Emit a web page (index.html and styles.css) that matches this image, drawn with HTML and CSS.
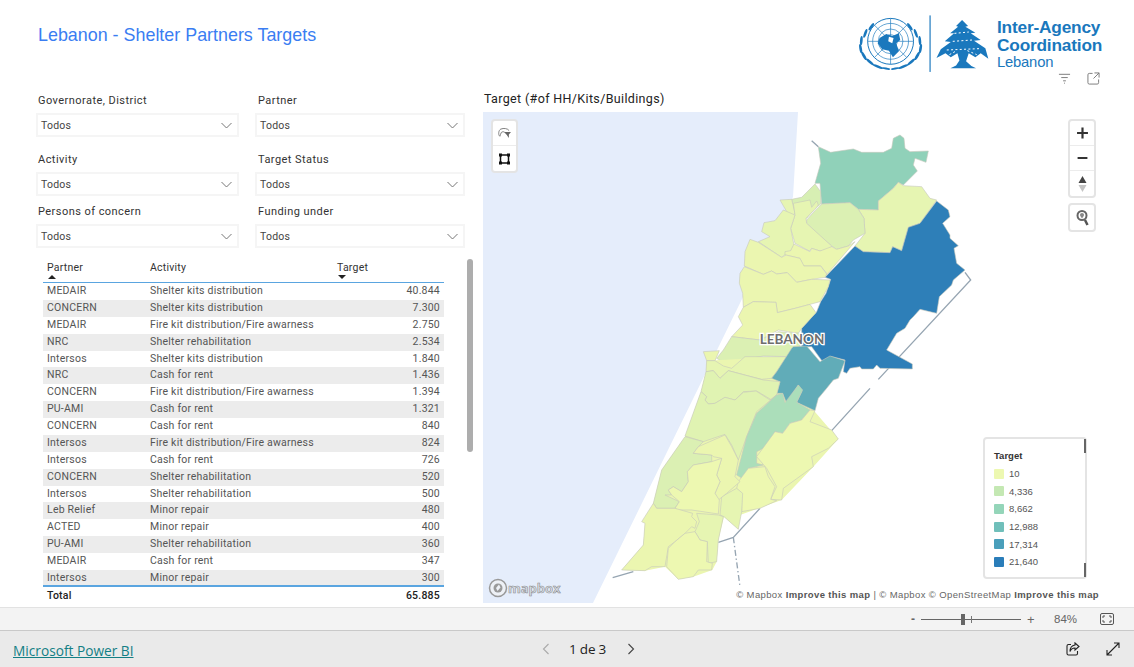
FILE: index.html
```html
<!DOCTYPE html>
<html lang="en">
<head>
<meta charset="utf-8">
<title>Lebanon - Shelter Partners Targets</title>
<link rel="stylesheet" href="styles.css">
</head>
<body>
<div class="report">
  <header class="header">
    <h1 class="title">Lebanon - Shelter Partners Targets</h1>
    <div class="brand">
      <div class="logo">
        <svg class="logo-art" viewBox="55 45 400 171" aria-hidden="true">
          <defs>
            <g id="wreath">
              <ellipse cx="-58" cy="-48" rx="4" ry="13" transform="rotate(35 -58 -48)"/>
              <ellipse cx="-76" cy="-28" rx="4" ry="14" transform="rotate(20 -76 -28)"/>
              <ellipse cx="-88" cy="-6" rx="4" ry="14" transform="rotate(5 -88 -6)"/>
              <ellipse cx="-90" cy="18" rx="4" ry="14" transform="rotate(-10 -90 18)"/>
              <ellipse cx="-80" cy="40" rx="4" ry="14" transform="rotate(-30 -80 40)"/>
              <ellipse cx="-62" cy="58" rx="4" ry="15" transform="rotate(-50 -62 58)"/>
              <ellipse cx="-38" cy="72" rx="4" ry="16" transform="rotate(-68 -38 72)"/>
              <ellipse cx="-14" cy="78" rx="3" ry="13" transform="rotate(-80 -14 78)"/>
            </g>
          </defs>
          <g class="art-fill" transform="translate(153 128)">
            <use href="#wreath"/>
            <use href="#wreath" transform="scale(-1 1)"/>
          </g>
          <g class="art-line" fill="none">
            <circle cx="153" cy="124" r="69" stroke-width="3"/>
            <circle cx="153" cy="124" r="54" stroke-width="2"/>
            <circle cx="153" cy="124" r="37" stroke-width="2"/>
            <circle cx="153" cy="124" r="20" stroke-width="2"/>
            <path d="M153 55V193M84 124H222M104 75L202 173M202 75L104 173" stroke-width="2"/>
          </g>
          <path class="art-fill" d="M120 114L140 102L158 108L178 100L182 120L170 130L178 154L160 172L148 152L128 148L114 130Z"/>
          <path class="art-white" d="M148 110L162 114L158 130L146 124Z"/>
          <rect class="art-fill" x="270" y="46" width="3.500" height="170"/>
          <path class="art-fill" d="M368 60L386 78L378 80L408 98L394 100L424 120L404 122L438 145L447 176L424 160L408 172L388 160L380 184L396 198L410 205H333L350 197L360 182L354 160L334 172L318 160L291 174L304 148L334 126L316 124L344 100L332 100L356 80L350 78Z"/>
          <path class="art-white-line" d="M340 124L398 120M322 150L420 146M345 100L388 96M330 164L352 152M384 152L412 164" stroke-dasharray="6 7"/>
        </svg>
        <div class="wordmark">
          <span class="word-strong">Inter-Agency</span>
          <span class="word-strong">Coordination</span>
          <span class="word-light">Lebanon</span>
        </div>
      </div>
      <div class="visual-icons">
        <svg class="vicon" viewBox="0 0 14 12" aria-hidden="true"><path d="M1 1.500H13M3.500 5H10.500M5.500 8.500H8.500M6.500 11H7.500"/></svg>
        <svg class="vicon" viewBox="0 0 14 14" aria-hidden="true"><path d="M6 1.500H2.500Q1 1.500 1 3V11.500Q1 13 2.500 13H11Q12.500 13 12.500 11.500V8M8 1H13V6M13 1L7 7"/></svg>
      </div>
    </div>
  </header>

  <div class="body">
    <section class="left">
      <div class="slicers">
        <div class="slicer"><div class="slicer-label">Governorate, District</div><div class="select"><span>Todos</span><svg class="chev" viewBox="0 0 12 7" aria-hidden="true"><path d="M1 1L6 6L11 1"/></svg></div></div>
        <div class="slicer"><div class="slicer-label">Partner</div><div class="select"><span>Todos</span><svg class="chev" viewBox="0 0 12 7" aria-hidden="true"><path d="M1 1L6 6L11 1"/></svg></div></div>
        <div class="slicer"><div class="slicer-label">Activity</div><div class="select"><span>Todos</span><svg class="chev" viewBox="0 0 12 7" aria-hidden="true"><path d="M1 1L6 6L11 1"/></svg></div></div>
        <div class="slicer"><div class="slicer-label">Target Status</div><div class="select"><span>Todos</span><svg class="chev" viewBox="0 0 12 7" aria-hidden="true"><path d="M1 1L6 6L11 1"/></svg></div></div>
        <div class="slicer"><div class="slicer-label">Persons of concern</div><div class="select"><span>Todos</span><svg class="chev" viewBox="0 0 12 7" aria-hidden="true"><path d="M1 1L6 6L11 1"/></svg></div></div>
        <div class="slicer"><div class="slicer-label">Funding under</div><div class="select"><span>Todos</span><svg class="chev" viewBox="0 0 12 7" aria-hidden="true"><path d="M1 1L6 6L11 1"/></svg></div></div>
      </div>

      <div class="table-visual">
        <div class="grid-table">
          <div class="row head">
            <div class="cell">Partner<i class="sort up"></i></div>
            <div class="cell">Activity</div>
            <div class="cell">Target<i class="sort down"></i></div>
          </div>
          <div class="row"><div class="cell">MEDAIR</div><div class="cell">Shelter kits distribution</div><div class="cell num">40.844</div></div>
          <div class="row alt"><div class="cell">CONCERN</div><div class="cell">Shelter kits distribution</div><div class="cell num">7.300</div></div>
          <div class="row"><div class="cell">MEDAIR</div><div class="cell">Fire kit distribution/Fire awarness</div><div class="cell num">2.750</div></div>
          <div class="row alt"><div class="cell">NRC</div><div class="cell">Shelter rehabilitation</div><div class="cell num">2.534</div></div>
          <div class="row"><div class="cell">Intersos</div><div class="cell">Shelter kits distribution</div><div class="cell num">1.840</div></div>
          <div class="row alt"><div class="cell">NRC</div><div class="cell">Cash for rent</div><div class="cell num">1.436</div></div>
          <div class="row"><div class="cell">CONCERN</div><div class="cell">Fire kit distribution/Fire awarness</div><div class="cell num">1.394</div></div>
          <div class="row alt"><div class="cell">PU-AMI</div><div class="cell">Cash for rent</div><div class="cell num">1.321</div></div>
          <div class="row"><div class="cell">CONCERN</div><div class="cell">Cash for rent</div><div class="cell num">840</div></div>
          <div class="row alt"><div class="cell">Intersos</div><div class="cell">Fire kit distribution/Fire awarness</div><div class="cell num">824</div></div>
          <div class="row"><div class="cell">Intersos</div><div class="cell">Cash for rent</div><div class="cell num">726</div></div>
          <div class="row alt"><div class="cell">CONCERN</div><div class="cell">Shelter rehabilitation</div><div class="cell num">520</div></div>
          <div class="row"><div class="cell">Intersos</div><div class="cell">Shelter rehabilitation</div><div class="cell num">500</div></div>
          <div class="row alt"><div class="cell">Leb Relief</div><div class="cell">Minor repair</div><div class="cell num">480</div></div>
          <div class="row"><div class="cell">ACTED</div><div class="cell">Minor repair</div><div class="cell num">400</div></div>
          <div class="row alt"><div class="cell">PU-AMI</div><div class="cell">Shelter rehabilitation</div><div class="cell num">360</div></div>
          <div class="row"><div class="cell">MEDAIR</div><div class="cell">Cash for rent</div><div class="cell num">347</div></div>
          <div class="row alt last"><div class="cell">Intersos</div><div class="cell">Minor repair</div><div class="cell num">300</div></div>
          <div class="row total"><div class="cell">Total</div><div class="cell"></div><div class="cell num">65.885</div></div>
        </div>
        <div class="scrollbar"></div>
      </div>
    </section>

    <section class="right">
      <h2 class="map-title">Target (#of HH/Kits/Buildings)</h2>
      <div class="map">
        <svg class="map-svg" viewBox="483 112 617 491" aria-hidden="true">
          <path class="water" d="M483 112H798L793 197L743 297L593 603H483Z"/>
          <g transform="translate(700 120) scale(.33333)">
            <path class="border" d="M335 62L355 80M795 457L812 480L535 778"/>
            <polygon class="c3" points="355,80 392,97 460,87 485,97 550,97 575,85 580,55 600,45 612,55 615,85 630,95 685,93 678,127 645,115 640,135 652,153 610,195 595,187 580,205 535,243 535,270 475,268 450,248 365,252 360,190 345,190 362,130"/>
            <polygon class="y2" points="475,268 535,270 535,243 580,205 595,187 610,197 665,200 690,235 710,240 660,310 625,322 605,392 578,380 570,398 490,395 465,378 495,340 492,295"/>
            <polygon class="c6" points="710,243 745,270 750,290 728,310 750,345 750,355 775,377 762,385 770,430 795,450 760,480 755,495 718,530 710,580 660,568 640,590 630,600 615,625 590,640 560,690 637,732 637,747 540,745 530,735 520,747 485,747 480,740 450,745 440,760 430,755 435,720 395,710 370,728 335,680 305,680 305,625 350,575 362,545 378,520 392,478 375,472 465,378 490,395 570,398 578,380 605,392 625,322 660,310"/>
            <polygon class="g1" points="320,300 345,272 365,252 450,248 475,268 492,295 495,340 460,360 445,378 410,388 395,378 350,340 320,310"/>
            <polygon class="g2" points="275,238 305,232 345,192 362,215 362,252 345,265 320,295 285,285"/>
            <polygon class="y2" points="240,240 275,238 285,280 270,292"/>
            <polygon class="y2" points="280,250 330,240 335,262 350,243 355,255 345,268 318,295 320,310 395,378 390,388 360,393 335,385 328,393 285,370 272,325 285,285"/>
            <polygon class="y2" points="250,270 285,285 272,325 282,375 275,390 245,412 175,365 210,350 185,335 192,308 225,302"/>
            <polygon class="y1" points="282,372 330,395 335,385 360,393 395,380 410,388 445,378 465,365 375,470 380,460 362,438 310,438 300,415 255,405 255,395 272,392"/>
            <polygon class="y1" points="150,358 175,367 245,412 258,405 300,415 312,438 362,438 380,462 375,472 335,478 290,487 262,458 230,462 215,453 190,463 133,438 135,395"/>
            <polygon class="y1" points="133,440 190,463 215,453 230,462 262,458 290,487 335,478 390,480 385,500 360,545 330,553 285,565 232,578 228,547 160,545 130,562 128,520 118,490 120,460"/>
            <polygon class="y1" points="130,562 160,545 228,547 232,578 285,565 330,553 348,578 305,625 295,640 235,630 180,660 95,650 128,615 115,590"/>
            <polygon class="g1" points="95,650 180,660 235,635 300,640 300,680 275,685 270,710 190,708 130,720 100,743 50,715 70,690"/>
          </g>
          <g transform="translate(600 340) scale(.33333)">
            <path class="border" d="M810 145L695 272M480 505L400 592L355 607M100 695L38 713"/>
            <path class="border dash" d="M400 592L420 740"/>
            <polygon class="base" points="320,62 560,50 640,210 715,297 640,380 545,480 420,525 415,568 372,530 355,600 350,665 337,690 280,710 235,718 195,680 135,692 65,690 130,615 135,550 160,490 185,390 255,290 303,155 318,95"/>
            <polygon class="y1" points="310,35 358,32 345,62 320,62"/>
            <polygon class="y2" points="320,62 345,62 370,78 395,85 435,50 560,50 530,95 515,115 485,118 385,92 360,115 340,92 318,95"/>
            <polygon class="c4" points="580,20 620,18 660,65 690,48 735,62 715,115 700,120 680,145 655,175 645,212 590,187 605,155 595,135 560,190 548,160 530,160 540,125 515,115 530,95 575,25"/>
            <polygon class="y3" points="318,95 340,92 360,115 385,92 490,120 540,125 530,165 515,180 470,153 430,155 405,180 375,172 345,190 325,192 315,180 320,170 303,155"/>
            <polygon class="y3" points="303,155 320,170 315,180 325,192 345,190 375,172 405,180 430,157 468,153 510,180 530,165 470,215 440,290 415,360 395,315 375,283 310,305 255,288"/>
            <polygon class="c2" points="530,165 548,160 555,188 595,135 608,150 590,187 630,210 605,240 570,250 548,280 525,275 510,315 470,335 470,370 490,375 445,385 435,420 410,405 440,290 470,220"/>
            <polygon class="y0" points="645,212 630,245 695,270 715,297 685,325 635,350 640,380 550,445 545,480 512,478 530,440 500,385 470,350 525,275 548,280 570,250 605,240 630,210"/>
            <polygon class="y0" points="415,425 445,385 495,380 505,410 525,440 512,478 530,482 480,505 425,515 425,460 410,445"/>
            <polygon class="y2" points="365,470 410,445 428,460 425,515 415,568 372,530 360,525"/>
            <polygon class="g1" points="255,290 310,305 295,320 280,340 335,345 335,365 280,375 262,395 265,425 245,455 220,440 205,450 215,465 195,465 238,485 225,505 170,505 160,490 185,390"/>
            <polygon class="y1" points="295,320 375,285 395,320 415,360 405,410 420,425 380,460 355,480 345,460 360,425 350,405 365,355 340,350 335,345 280,340"/>
            <polygon class="y0" points="205,450 220,440 245,455 265,425 262,395 280,375 335,365 365,355 350,405 360,425 345,460 358,480 355,522 275,510 235,510 225,505 238,485 215,465"/>
            <polygon class="y1" points="160,490 170,505 225,505 278,520 275,530 290,545 285,565 275,560 255,580 225,605 205,620 195,680 155,680 135,692 65,690 130,615 135,550 125,545"/>
            <polygon class="y2" points="290,520 355,525 370,530 355,600 350,665 325,670 322,605 300,600 285,575 298,545"/>
            <polygon class="y0" points="255,580 285,575 300,600 322,605 320,665 337,670 335,690 295,690 280,710 235,718 200,680 205,625 225,605"/>
          </g>
          <text class="country" x="792" y="344">LEBANON</text>
        </svg>

        <div class="tool-box tools-left">
          <div class="tool"><svg class="t-ico" viewBox="0 0 14 12" aria-hidden="true"><path class="soft" d="M2 9.500C0 8 .5 3 3 1.800C6 .5 10.500 1 12 3.500M2 9.500C3 8.500 2.500 6.500 3.500 5.500C4.500 4.500 6 4.500 7 5"/><path class="solid" d="M6.500 5H14L11.700 7.500V11.500L9.300 7.800Z"/></svg></div>
          <div class="tool"><svg class="t-ico" viewBox="0 0 12 12" aria-hidden="true"><rect class="dark" x="2" y="2" width="8" height="8"/><rect class="solid-b" x=".5" y=".5" width="3" height="3"/><rect class="solid-b" x="8.500" y=".5" width="3" height="3"/><rect class="solid-b" x=".5" y="8.500" width="3" height="3"/><rect class="solid-b" x="8.500" y="8.500" width="3" height="3"/></svg></div>
        </div>

        <div class="tools-right">
          <div class="tool-box">
            <div class="tool big"><svg class="t-ico" viewBox="0 0 11 11" aria-hidden="true"><path class="thick" d="M5.500 .5V10.500M.5 5.500H10.500"/></svg></div>
            <div class="tool big"><svg class="t-ico" viewBox="0 0 11 11" aria-hidden="true"><path class="thick" d="M1 5.500H10"/></svg></div>
            <div class="tool big"><svg class="t-ico tall" viewBox="0 0 10 16" aria-hidden="true"><path class="solid-g" d="M5 0L9 7H1Z"/><path class="solid-l" d="M1 9H9L5 16Z"/></svg></div>
          </div>
          <div class="tool-box">
            <div class="tool big"><svg class="t-ico tall" viewBox="0 0 12 16" aria-hidden="true"><circle class="ring" cx="5.500" cy="5.500" r="4.500"/><path class="solid-m" d="M5.500 3C4.300 3 3.500 3.900 3.500 5C3.500 6.200 5.500 8.300 5.500 8.300C5.500 8.300 7.500 6.200 7.500 5C7.500 3.900 6.700 3 5.500 3Z"/><path class="handle" d="M8.500 10L11 15"/></svg></div>
          </div>
        </div>

        <div class="mapbox-logo">
          <svg class="mb-ico" viewBox="0 0 20 20" aria-hidden="true"><circle class="mb-ring" cx="10" cy="10" r="8.500"/><circle class="mb-dot" cx="10" cy="10" r="4.500"/><path class="mb-star" d="M11 6.500L12.500 9.500L9.500 13L8 10Z"/></svg>
          <span>mapbox</span>
        </div>

        <div class="legend">
          <i class="lg-bar lg-top"></i><i class="lg-bar lg-bottom"></i>
          <div class="lg-title">Target</div>
          <div class="lg-item"><i class="sw c-a"></i>10</div>
          <div class="lg-item"><i class="sw c-b"></i>4,336</div>
          <div class="lg-item"><i class="sw c-c"></i>8,662</div>
          <div class="lg-item"><i class="sw c-d"></i>12,988</div>
          <div class="lg-item"><i class="sw c-e"></i>17,314</div>
          <div class="lg-item"><i class="sw c-f"></i>21,640</div>
        </div>

        <div class="attribution">© Mapbox <b>Improve this map</b> | © Mapbox © OpenStreetMap <b>Improve this map</b></div>
      </div>
    </section>
  </div>
</div>

<div class="zoombar">
  <span class="z-minus">-</span>
  <div class="z-track"><i class="z-tick"></i><i class="z-thumb"></i></div>
  <span class="z-plus">+</span>
  <span class="z-val">84%</span>
  <svg class="z-fit" viewBox="0 0 14 12" aria-hidden="true"><rect x=".5" y=".5" width="13" height="11" rx="1.500"/><path d="M3 5V3H5M9 3H11V5M11 7V9H9M5 9H3V7"/></svg>
</div>

<footer class="footer">
  <a class="pbi" href="#">Microsoft Power BI</a>
  <nav class="pager">
    <svg class="pg dim" viewBox="0 0 8 12" aria-hidden="true"><path d="M6.500 1L1.500 6L6.500 11"/></svg>
    <span class="pg-text">1 de 3</span>
    <svg class="pg" viewBox="0 0 8 12" aria-hidden="true"><path d="M1.500 1L6.500 6L1.500 11"/></svg>
  </nav>
  <div class="foot-icons">
    <svg class="fi" viewBox="0 0 14 14" aria-hidden="true"><path d="M5 2.500H2.500Q1 2.500 1 4V11.500Q1 13 2.500 13H10Q11.500 13 11.500 11.500V9M9 1L13 4.500L9 8V6C6.500 6 5 7 4 9.500C4 6 6 3.500 9 3Z"/></svg>
    <svg class="fi" viewBox="0 0 14 14" aria-hidden="true"><path d="M1 13L13 1M8 1H13V6M1 8V13H6"/></svg>
  </div>
</footer>
</body>
</html>
```

FILE: styles.css
```css
* { box-sizing: border-box; }
html, body { margin: 0; padding: 0; }
body {
  width: 1134px;
  height: 667px;
  overflow: hidden;
  background: #fff;
  display: flex;
  flex-direction: column;
  font-family: "Liberation Sans", Arial, sans-serif;
}

/* report canvas */
.report { height: 607px; display: flex; flex-direction: column; }
.header { height: 90px; display: flex; justify-content: space-between; flex: none; }
.title {
  margin: 25px 0 0 38px;
  font-size: 17.900px;
  line-height: 21px;
  font-weight: 400;
  color: #3a7df2;
}
.brand { width: 276px; padding-top: 15px; flex: none; }
.logo { display: flex; height: 57px; }
.logo-art { width: 133px; height: 57px; flex: none; }
.art-fill { fill: #1a78bd; }
.art-line { stroke: #1a78bd; }
.art-white { fill: #fff; }
.art-white-line { stroke: #fff; stroke-width: 3; fill: none; }
.wordmark {
  margin-left: 6px;
  display: flex;
  flex-direction: column;
  padding-top: 4px;
  color: #1a78bd;
  line-height: 17px;
  letter-spacing: -.2px;
}
.word-strong { font-weight: 700; font-size: 17.300px; line-height: 17.500px; white-space: nowrap; }
.word-light { font-size: 14.800px; line-height: 16px; font-weight: 400; }
.visual-icons { display: flex; gap: 16px; padding-left: 200px; }
.vicon { width: 13px; height: 13px; fill: none; stroke: #777; stroke-width: 1; }

.body { flex: 1; display: flex; min-height: 0; }

/* left column */
.left { width: 483px; padding-left: 36px; flex: none; }
.slicers {
  display: grid;
  grid-template-columns: 203px 210px;
  column-gap: 16px;
  height: 157px;
  grid-template-rows: 59px 52px 46px;
}
.slicer-label {
  height: 23px;
  padding-left: 2px;
  font-family: Roboto, sans-serif;
  font-size: 11px;
  line-height: 22px;
  letter-spacing: .45px;
  color: #333;
}
.slicer:nth-child(even) .slicer-label { padding-left: 3px; }
.select {
  height: 24px;
  border: 2px solid #f5f5f5;
  display: flex;
  align-items: center;
  justify-content: space-between;
  padding: 0 3px 0 3px;
  font-family: Roboto, sans-serif;
  font-size: 10.500px;
  letter-spacing: .2px;
  color: #444;
}
.chev { width: 13px; height: 7px; margin-right: 1px; fill: none; stroke: #777; stroke-width: 1; }

.table-visual { display: flex; gap: 23px; padding-left: 7px; margin-top: 13px; }
.grid-table {
  width: 401px;
  font-family: Roboto, sans-serif;
  font-size: 10.500px;
  letter-spacing: .22px;
  color: #555;
}
.row {
  display: grid;
  grid-template-columns: 103px 187px 111px;
  height: 16.880px;
  line-height: 16.880px;
}
.row.alt { background: #ececec; }
.cell { padding: 0 4px; white-space: nowrap; position: relative; }
.num { text-align: right; padding-right: 4px; }
.head {
  height: 23px;
  line-height: 16px;
  color: #333;
  border-bottom: 1px solid #5aa5e0;
}
.sort { position: absolute; left: 5px; top: 15px; width: 0; height: 0; border-left: 4px solid transparent; border-right: 4px solid transparent; }
.sort.up { border-bottom: 4px solid #222; }
.sort.down { border-top: 4px solid #222; }
.row.last { border-bottom: 2px solid #5aa5e0; height: 17.500px; }
.total { color: #222; font-weight: 500; height: 18px; line-height: 17px; }
.scrollbar { width: 6px; height: 193px; margin-top: -1px; background: #adadad; border-radius: 3px; flex: none; }

/* right column */
.right { flex: 1; min-width: 0; }
.map-title {
  margin: 1px 0 0;
  height: 21px;
  padding-left: 1px;
  font-family: Roboto, sans-serif;
  font-size: 12.500px;
  line-height: 16px;
  font-weight: 400;
  letter-spacing: .35px;
  color: #222;
}
.map { position: relative; width: 617px; height: 491px; }
.map-svg { display: block; width: 617px; height: 491px; }
.water { fill: #e5edfb; }
.map-svg polygon { stroke: #c6c8bc; stroke-width: 1.800; stroke-linejoin: round; }
.map-svg .base { fill: #ebf6b0; stroke: none; }
.border { fill: none; stroke: #96a5b2; stroke-width: 4; }
.dash { stroke-dasharray: 18 8 4 8; }
.y0 { fill: #edf8b1; }
.y1 { fill: #ebf6b0; }
.y2 { fill: #e6f5b2; }
.y3 { fill: #e0f3b2; }
.g1 { fill: #dbf0b3; }
.g2 { fill: #d7efb3; }
.c2 { fill: #abdeba; }
.c3 { fill: #90d1b9; }
.c4 { fill: #61acb8; }
.c6 { fill: #2e7fb8; }
.country {
  font-family: Lato, sans-serif;
  font-size: 13.500px;
  font-weight: 700;
  text-anchor: middle;
  fill: #6e6e6e;
  stroke: #fff;
  stroke-width: 2.500px;
  paint-order: stroke;
}

.tool-box {
  background: #fff;
  border: 2px solid #e4e4e4;
  border-radius: 4px;
  overflow: hidden;
}
.tools-left { position: absolute; left: 8px; top: 7px; width: 27px; }
.tool { height: 25px; display: flex; align-items: center; justify-content: center; border-bottom: 1px solid #ececec; }
.tool:last-child { border-bottom: 0; }
.t-ico { width: 13px; height: 12px; }
.t-ico.tall { height: 16px; }
.soft { fill: none; stroke: #777; stroke-width: 1; }
.solid { fill: #666; }
.dark { fill: none; stroke: #111; stroke-width: 1.500; }
.solid-b { fill: #111; }
.thick { fill: none; stroke: #333; stroke-width: 2; }
.solid-g { fill: #444; }
.solid-l { fill: #c4c4c4; }
.ring { fill: none; stroke: #666; stroke-width: 2; }
.solid-m { fill: #888; }
.handle { stroke: #555; stroke-width: 2.500; }
.tools-right { position: absolute; right: 4px; top: 7px; width: 28px; display: flex; flex-direction: column; gap: 5px; }

.mapbox-logo {
  position: absolute;
  left: 5px;
  bottom: 5px;
  display: flex;
  align-items: center;
  font-family: "Open Sans", sans-serif;
  font-size: 13px;
  font-weight: 700;
  line-height: 20px;
  color: #d9dfea;
  -webkit-text-stroke: .6px #8f8f8f;
}
.mb-ico { width: 20px; height: 20px; }
.mb-ring { fill: #eef1f6; stroke: #999; stroke-width: 1.500; }
.mb-dot { fill: #9a9a9a; }
.mb-star { fill: #eef1f6; }

.legend {
  position: absolute;
  left: 500px;
  top: 325px;
  width: 104px;
  height: 142px;
  background: #fff;
  border: 2px solid #e4e4e4;
  border-radius: 4px;
  padding: 9px 0 0 9px;
  font-size: 9.500px;
  color: #555;
}
.lg-bar { position: absolute; right: -1px; width: 2px; background: #666; }
.lg-top { top: 0; height: 14px; }
.lg-bottom { bottom: 0; height: 14px; }
.lg-title { font-weight: 700; font-size: 9.500px; line-height: 16px; color: #333; margin-bottom: 1px; }
.lg-item { display: flex; align-items: center; gap: 5px; height: 17.600px; }
.sw { width: 10px; height: 10px; border-radius: 1px; }
.c-a { background: #edf8b1; }
.c-b { background: #c4e8b3; }
.c-c { background: #94d5b9; }
.c-d { background: #70bfba; }
.c-e { background: #4a9fbb; }
.c-f { background: #2a7db9; }

.attribution {
  position: absolute;
  right: 1px;
  bottom: 3px;
  font-size: 9.500px;
  line-height: 11px;
  letter-spacing: .38px;
  color: #666;
  white-space: nowrap;
}
.attribution b { color: #555; font-weight: 700; }

/* zoom bar */
.zoombar {
  height: 24px;
  flex: none;
  display: flex;
  align-items: center;
  justify-content: flex-end;
  background: #f3f3f3;
  border-top: 1px solid #e2e2e2;
  border-bottom: 1px solid #c9c9c9;
  padding-right: 20px;
  color: #666;
  font-size: 12px;
}
.z-minus { font-weight: 700; width: 9px; margin-right: 1px; }
.z-track { position: relative; width: 100px; height: 1px; background: #666; margin: 0 6px 0 0; }
.z-tick { position: absolute; left: 50px; top: -3px; width: 1px; height: 7px; background: #777; }
.z-thumb { position: absolute; left: 40px; top: -5px; width: 4px; height: 11px; background: #666; }
.z-plus { width: 14px; font-size: 13px; }
.z-val { margin-left: 13px; width: 46px; font-size: 11.500px; }
.z-fit { width: 14px; height: 12px; fill: none; stroke: #555; stroke-width: 1; }

/* footer */
.footer {
  flex: 1;
  display: flex;
  align-items: center;
  background: #eaeaea;
  padding: 0 14px 0 13px;
}
.pbi {
  padding-top: 3px;
  font-family: "Open Sans", sans-serif;
  font-size: 13.700px;
  color: #137f85;
  text-decoration: underline;
  width: 529px;
  flex: none;
}
.pager { display: flex; align-items: center; gap: 19px; }
.pg { width: 8px; height: 12px; fill: none; stroke: #444; stroke-width: 1.100; }
.pg.dim { stroke: #aaa; }
.pg-text { font-family: "Open Sans", sans-serif; font-size: 13.500px; font-weight: 500; color: #222; letter-spacing: -.2px; margin-right: 2px; }
.foot-icons { margin-left: auto; display: flex; gap: 26px; }
.fi { width: 14px; height: 14px; fill: none; stroke: #222; stroke-width: 1.100; }
```
